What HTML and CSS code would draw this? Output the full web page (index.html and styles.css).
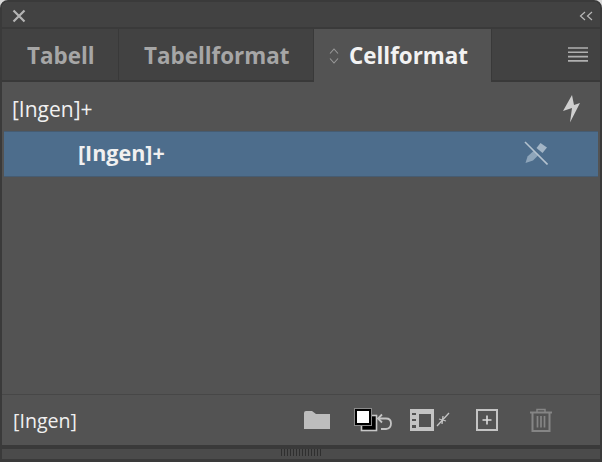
FILE: index.html
```html
<!DOCTYPE html>
<html lang="en">
<head>
  <meta charset="UTF-8">
  <title>Cellformat</title>
  <link rel="stylesheet" href="styles.css">
</head>
<body>
  <div class="panel">
    <!-- Title bar -->
    <div class="titlebar">
      <svg class="icon" width="14" height="14" viewBox="0 0 14 14"><path d="M1.5 1.5L12.5 12.5M12.5 1.5L1.5 12.5" stroke="#b4b4b4" stroke-width="2.2" fill="none"/></svg>
      <svg class="icon" width="14" height="10" viewBox="0 0 14 10"><path d="M6 1L1.5 5L6 9M13 1L8.5 5L13 9" stroke="#b8b8b8" stroke-width="1.2" fill="none"/></svg>
    </div>
    <!-- Tabs -->
    <div class="tabs">
      <div class="tab tab-first">Tabell</div>
      <div class="tab tab-second">Tabellformat</div>
      <div class="tab tab-active">
        <svg class="icon" width="12" height="18" viewBox="0 0 12 18"><path d="M2 6.5L6 2L10 6.5M2 11.5L6 16L10 11.5" stroke="#9a9a9a" stroke-width="1.1" fill="none"/></svg>
        <span>Cellformat</span>
      </div>
      <div class="tabs-rest">
        <svg class="icon" width="20" height="15" viewBox="0 0 20 15"><path d="M0 1h20M0 5.3h20M0 9.6h20M0 13.9h20" stroke="#b0b0b0" stroke-width="1.6" fill="none"/></svg>
      </div>
    </div>
    <!-- List -->
    <div class="list">
      <div class="group-row">
        <span>[Ingen]+</span>
        <svg class="icon" width="18" height="28" viewBox="0 0 18 28"><path d="M9 0L0 16L9 13L7 27.5L17 8L11 10Z" fill="#cfcfcf"/></svg>
      </div>
      <div class="style-row">
        <span>[Ingen]+</span>
        <svg class="icon" width="24" height="24" viewBox="0 0 24 24">
          <path d="M16.5 2L23 6.5L18.5 12L12.5 7Z" fill="#a3b5c6"/>
          <path d="M9.5 10L14 14.5L9 19.5L1.5 22L3.5 15.5Z" fill="#8ea5ba"/>
          <path d="M1 1L23.5 23.5" stroke="#b4c2cf" stroke-width="1.6" fill="none"/>
        </svg>
      </div>
    </div>
    <!-- Footer -->
    <div class="footer">
      <span class="footer-label">[Ingen]</span>
      <div class="footer-icons">
        <svg class="icon" width="27" height="20" viewBox="0 0 27 20"><path d="M0 19V3Q0 1 2 1H8L12 4H26V19Z" fill="#bdbdbd"/></svg>
        <svg class="icon icon-swatch" width="39" height="25" viewBox="0 0 39 25">
          <rect x="7.5" y="7.5" width="15" height="15" fill="#000" stroke="#c8c8c8" stroke-width="1.6"/>
          <rect x="0.5" y="0.5" width="17" height="17" fill="#000" stroke="#8a8a8a"/>
          <rect x="3" y="3" width="12" height="12" fill="#fff"/>
          <path d="M24.5 10.5H32Q37 10.5 37 15.5T32 21H27" stroke="#c4c4c4" stroke-width="1.8" fill="none"/>
          <path d="M28 6.5L24 10.5L28 14.5" stroke="#c4c4c4" stroke-width="1.8" fill="none"/>
        </svg>
        <svg class="icon icon-frame" width="40" height="22" viewBox="0 0 40 22">
          <path d="M0 0H24V22H0ZM2 4V6H6V4ZM2 10V12H6V10ZM2 16V19H6V16ZM9 5V18H21V5Z" fill="#c4c4c4" fill-rule="evenodd"/>
          <path d="M27 17L39 4M29 10L36 12M33 7L32 15" stroke="#c4c4c4" stroke-width="1.3" fill="none"/>
        </svg>
        <svg class="icon icon-add" width="22" height="22" viewBox="0 0 22 22">
          <rect x="1" y="1" width="20" height="20" fill="none" stroke="#c4c4c4" stroke-width="2"/>
          <path d="M11 6.5V15.5M6.5 11H15.5" stroke="#dcdcdc" stroke-width="1.6" fill="none"/>
        </svg>
        <svg class="icon icon-trash" width="22" height="24" viewBox="0 0 22 24" fill="none" stroke="#858585">
          <path d="M0 4.5H22" stroke-width="2"/>
          <path d="M7 4V1.5H15V4" stroke-width="1.5"/>
          <path d="M2.5 5V23H19.5V5" stroke-width="2"/>
          <path d="M7.5 8V19.5M11 8V19.5M14.5 8V19.5" stroke-width="1.7"/>
        </svg>
      </div>
    </div>
    <!-- Resize grip -->
    <div class="grip"><div class="grip-lines"></div></div>
  </div>
</body>
</html>
```

FILE: styles.css
```css
html, body {
  margin: 0;
  background: #d8d8d8;
}
body {
  font-family: "Open Sans", Arial, sans-serif;
}
.icon {
  display: block;
  flex: none;
}
.panel {
  width: 602px;
  height: 462px;
  box-sizing: border-box;
  display: flex;
  flex-direction: column;
  background: #535353;
  border: 2px solid #3a3a3a;
  border-bottom-width: 3px;
  border-radius: 8px 8px 0 0;
  overflow: hidden;
}
.titlebar {
  height: 25px;
  flex: none;
  display: flex;
  justify-content: space-between;
  align-items: center;
  padding: 2px 7px 0 10px;
  box-sizing: border-box;
  background: #424242;
}
.tabs {
  height: 55px;
  flex: none;
  display: flex;
  background: #424242;
  border-top: 2px solid #3a3a3a;
  box-sizing: border-box;
}
.tab {
  display: flex;
  align-items: center;
  box-sizing: border-box;
  padding-top: 2px;
  font-size: 22.4px;
  font-weight: 700;
  color: #a6a6a6;
  border-right: 1px solid #393939;
  border-bottom: 2px solid #393939;
}
.tab-first {
  width: 117px;
  padding-left: 25px;
}
.tab-second {
  width: 195px;
  padding-left: 25px;
}
.tab-active {
  width: 179px;
  padding-left: 14px;
  padding-top: 0;
  gap: 9px;
  color: #f2f2f2;
  background: #535353;
  border-bottom: 0;
  border-left: 1px solid #393939;
  margin-left: -1px;
}
.tabs-rest {
  flex: 1;
  display: flex;
  justify-content: flex-end;
  align-items: center;
  padding-right: 12px;
  border-bottom: 2px solid #393939;
}
.list {
  flex: 1;
  display: flex;
  flex-direction: column;
  color: #f0f0f0;
  font-size: 21px;
}
.group-row {
  height: 49px;
  display: flex;
  justify-content: space-between;
  align-items: center;
  padding: 5px 19px 0 10px;
  box-sizing: border-box;
  font-weight: 500;
}
.style-row {
  height: 46px;
  margin: 0 2px;
  display: flex;
  justify-content: space-between;
  align-items: center;
  padding: 0 50px 3px 74px;
  background: #4d6d8c;
  border-top: 1px solid #465c72;
  border-bottom: 1px solid #465c72;
  font-size: 21.5px;
  font-weight: 700;
  box-sizing: border-box;
}
.footer {
  height: 55px;
  flex: none;
  display: flex;
  justify-content: space-between;
  align-items: center;
  padding: 0 48px 0 11px;
  box-sizing: border-box;
  border-top: 1px solid #474747;
  border-bottom: 4px solid #3a3a3a;
  color: #f0f0f0;
  font-size: 19.6px;
  font-weight: 500;
}
.footer-icons {
  display: flex;
  align-items: center;
}
.icon-swatch { margin-left: 23px; }
.icon-frame { margin-left: 17px; }
.icon-add { margin-left: 26px; }
.icon-trash { margin-left: 32px; }
.grip {
  height: 10px;
  flex: none;
  display: flex;
  justify-content: center;
  background: #4b4b4b;
}
.grip-lines {
  width: 40px;
  height: 7px;
  background: repeating-linear-gradient(90deg, #2f2f2f 0 1px, transparent 1px 3px);
}
```
